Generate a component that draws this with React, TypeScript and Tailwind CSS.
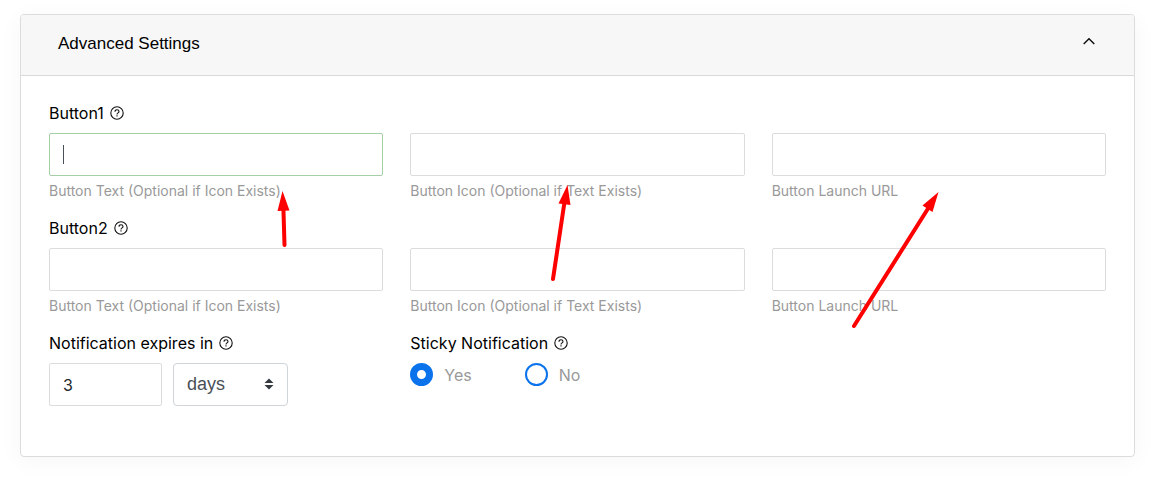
import React, { useId } from "react";

const inputClass =
  "block h-[43px] w-full rounded-[2px] border bg-white px-[13px] font-['Inter',sans-serif] text-base text-[#212529] outline-none";

function HelpIcon() {
  return (
    <svg viewBox="0 0 14 14" className="h-[14px] w-[14px]" fill="none" stroke="#111" strokeWidth="1.1" aria-hidden="true">
      <circle cx="7" cy="7" r="6.2" />
      <path d="M5 5.7C5 4.4 5.8 3.8 7 3.8s2 .7 2 1.7c0 1.3-2 1.4-2 2.9" />
      <path d="M7 9.3v1.2" />
    </svg>
  );
}

function Title({ children }: { children: React.ReactNode }) {
  return (
    <div className="mb-2 flex h-6 items-center gap-[6px] text-base text-black">
      {children}
      <HelpIcon />
    </div>
  );
}

function Field({ hint, active = false }: { hint: string; active?: boolean }) {
  const id = useId();
  return (
    <div>
      <div className="relative">
        <input id={id} type="text" className={`${inputClass} ${active ? "border-[#a5cfa5]" : "border-[#dcdcdc]"}`} />
        {active && <span className="absolute top-3 left-[14px] h-[19px] w-px bg-[#495057]" />}
      </div>
      <label htmlFor={id} className="mt-[5px] block text-sm leading-5 text-[#999]">
        {hint}
      </label>
    </div>
  );
}

function ButtonRow({ title, active = false }: { title: string; active?: boolean }) {
  return (
    <section className="mb-[15px]">
      <Title>
        <h3>{title}</h3>
      </Title>
      <div className="grid grid-cols-3 gap-[27px]">
        <Field hint="Button Text (Optional if Icon Exists)" active={active} />
        <Field hint="Button Icon (Optional if Text Exists)" />
        <Field hint="Button Launch URL" />
      </div>
    </section>
  );
}

function Radio({ label, checked = false }: { label: string; checked?: boolean }) {
  return (
    <label className="flex items-center gap-[11px] text-base leading-[22px] text-[#999]">
      <input
        type="radio"
        name="sticky"
        defaultChecked={checked}
        className="h-[23px] w-[23px] appearance-none rounded-full border-2 border-[#0a73eb] bg-white checked:border-[7px]"
      />
      {label}
    </label>
  );
}

function Arrows() {
  return (
    <svg width="1163" height="502" className="pointer-events-none absolute top-0 left-0" fill="#f00" stroke="#f00" aria-hidden="true">
      <g strokeWidth="4" strokeLinecap="round">
        <path d="M284.500 245L283.400 208" />
        <path d="M553 279L564.500 202" />
        <path d="M854 326L929 207" />
      </g>
      <g stroke="none">
        <path d="M282.500 191L289.500 210.500L277.500 211Z" />
        <path d="M567.500 185L570.500 205L558.500 203.500Z" />
        <path d="M938.500 192L932.500 212L922.500 205.500Z" />
      </g>
    </svg>
  );
}

export default function App() {
  return (
    <main className="relative min-h-screen bg-white pt-[14px] pr-7 pb-[45px] pl-5 font-['Inter',sans-serif]">
      <div className="rounded-[4px] border border-[#dcdcdc] bg-white shadow-[0_4px_25px_rgba(0,0,0,0.04)]">
        <h2>
          <button
            type="button"
            aria-expanded="true"
            className="flex h-[61px] w-full items-center justify-between rounded-t-[3px] border-b border-[#d9d9d9] bg-[#f7f7f7] pr-[38px] pb-[2px] pl-[37px] font-['Liberation_Sans',sans-serif] text-[17px] text-black"
          >
            Advanced Settings
            <svg viewBox="0 0 14 14" className="h-[14px] w-[14px]" fill="none" stroke="#111" strokeWidth="1.5" aria-hidden="true">
              <path d="M1.700 7L7 1.800l5.300 5.200" />
            </svg>
          </button>
        </h2>

        <form className="px-7 pt-[25px] pb-[50px]">
          <ButtonRow title="Button1" active />
          <ButtonRow title="Button2" />
          <div className="grid grid-cols-3 gap-[27px]">
            <div>
              <Title>
                <label htmlFor="expires">Notification expires in</label>
              </Title>
              <div className="flex gap-[11px]">
                <div className="w-[113px]">
                  <input id="expires" type="text" defaultValue="3" className={`${inputClass} border-[#dcdcdc]`} />
                </div>
                <div className="relative w-[115px]">
                  <select
                    aria-label="Expiry unit"
                    className="h-[43px] w-full appearance-none rounded-[4px] border border-[#ced4da] bg-white px-[13px] pb-[2px] font-['Liberation_Sans',sans-serif] text-lg text-[#495057]"
                  >
                    <option>days</option>
                  </select>
                  <svg viewBox="0 0 10 12" className="pointer-events-none absolute top-[15px] right-[14px] h-3 w-[10px]" fill="#343a40" aria-hidden="true">
                    <path d="M.5 5L5 .5 9.500 5zM.5 7L5 11.500 9.500 7z" />
                  </svg>
                </div>
              </div>
            </div>
            <fieldset>
              <Title>
                <span>Sticky Notification</span>
              </Title>
              <div className="flex gap-[53px]">
                <Radio label="Yes" checked />
                <Radio label="No" />
              </div>
            </fieldset>
          </div>
        </form>
      </div>
      <Arrows />
    </main>
  );
}
